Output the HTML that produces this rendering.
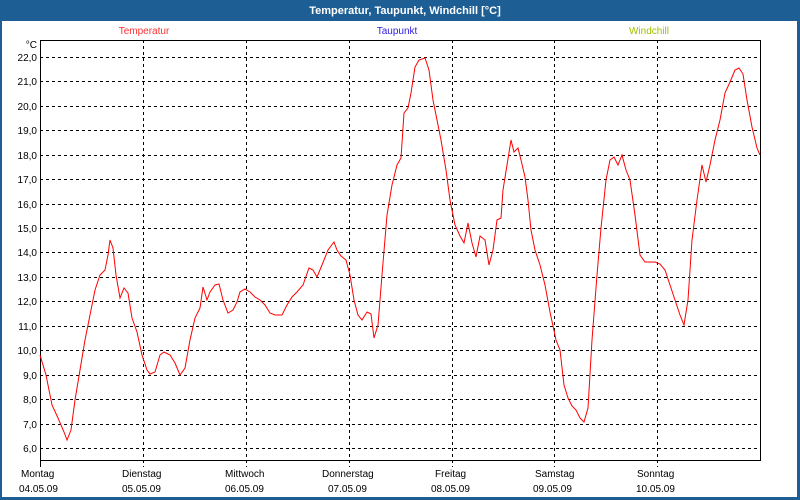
<!DOCTYPE html>
<html><head><meta charset="utf-8"><style>
html,body{margin:0;padding:0;width:800px;height:500px;overflow:hidden;background:#1d5e94;}
</style></head><body>
<svg width="800" height="500" xmlns="http://www.w3.org/2000/svg" font-family="'Liberation Sans', sans-serif">
<rect x="0" y="0" width="800" height="500" fill="#1d5e94"/>
<rect x="2" y="21" width="795" height="476" fill="#fff"/>
<text x="405" y="14" fill="#fff" font-size="11" font-weight="bold" text-anchor="middle">Temperatur, Taupunkt, Windchill [°C]</text>
<text x="144" y="34" fill="#ff3030" font-size="10" text-anchor="middle">Temperatur</text>
<text x="397" y="34" fill="#3020e0" font-size="10" text-anchor="middle">Taupunkt</text>
<text x="649" y="34" fill="#a0c000" font-size="10" text-anchor="middle">Windchill</text>
<g stroke="#000" stroke-width="1" stroke-dasharray="3,3" shape-rendering="crispEdges">
<line x1="40" x2="760" y1="57.5" y2="57.5"/><line x1="40" x2="760" y1="81.5" y2="81.5"/><line x1="40" x2="760" y1="106.5" y2="106.5"/><line x1="40" x2="760" y1="130.5" y2="130.5"/><line x1="40" x2="760" y1="155.5" y2="155.5"/><line x1="40" x2="760" y1="179.5" y2="179.5"/><line x1="40" x2="760" y1="204.5" y2="204.5"/><line x1="40" x2="760" y1="228.5" y2="228.5"/><line x1="40" x2="760" y1="252.5" y2="252.5"/><line x1="40" x2="760" y1="277.5" y2="277.5"/><line x1="40" x2="760" y1="301.5" y2="301.5"/><line x1="40" x2="760" y1="326.5" y2="326.5"/><line x1="40" x2="760" y1="350.5" y2="350.5"/><line x1="40" x2="760" y1="375.5" y2="375.5"/><line x1="40" x2="760" y1="399.5" y2="399.5"/><line x1="40" x2="760" y1="424.5" y2="424.5"/><line x1="40" x2="760" y1="448.5" y2="448.5"/>
<line x1="143.5" x2="143.5" y1="40" y2="467"/><line x1="246.5" x2="246.5" y1="40" y2="467"/><line x1="349.5" x2="349.5" y1="40" y2="467"/><line x1="452.5" x2="452.5" y1="40" y2="467"/><line x1="554.5" x2="554.5" y1="40" y2="467"/><line x1="657.5" x2="657.5" y1="40" y2="467"/>
</g>
<path d="M40.5 40.5V460.5H760.5V40.5Z" fill="none" stroke="#000" stroke-width="1" shape-rendering="crispEdges"/>
<line x1="40.5" x2="40.5" y1="460" y2="467" stroke="#000" shape-rendering="crispEdges"/>
<g font-size="10" fill="#000" text-anchor="end">
<text x="37" y="48">°C</text>
<text x="37" y="61">22,0</text><text x="37" y="85">21,0</text><text x="37" y="110">20,0</text><text x="37" y="134">19,0</text><text x="37" y="159">18,0</text><text x="37" y="183">17,0</text><text x="37" y="208">16,0</text><text x="37" y="232">15,0</text><text x="37" y="256">14,0</text><text x="37" y="281">13,0</text><text x="37" y="305">12,0</text><text x="37" y="330">11,0</text><text x="37" y="354">10,0</text><text x="37" y="379">9,0</text><text x="37" y="403">8,0</text><text x="37" y="428">7,0</text><text x="37" y="452">6,0</text>
</g>
<g font-size="10" fill="#000">
<text x="21" y="477">Montag</text><text x="19" y="492">04.05.09</text>
<text x="122" y="477">Dienstag</text><text x="122" y="492">05.05.09</text>
<text x="225" y="477">Mittwoch</text><text x="225" y="492">06.05.09</text>
<text x="322" y="477">Donnerstag</text><text x="328" y="492">07.05.09</text>
<text x="435" y="477">Freitag</text><text x="431" y="492">08.05.09</text>
<text x="535" y="477">Samstag</text><text x="533" y="492">09.05.09</text>
<text x="637" y="477">Sonntag</text><text x="636" y="492">10.05.09</text>
</g>
<polyline fill="none" stroke="#ff0000" stroke-width="1" points="40,355 46,375 52,405 58,418 64,432 67,440 71,430 75,400 80,370 85,340 90,315 95,290 100,275 105,270 108,255 110,240 113,248 116,275 120,298 124,288 128,293 132,318 137,332 142,355 147,370 150,374 155,372 160,355 164,352 170,355 175,363 180,375 185,368 190,340 195,318 200,308 203,287 207,300 210,292 215,285 219,284 223,300 228,313 233,310 237,302 240,292 245,289 250,292 255,297 260,300 265,305 270,313 275,315 282,315 287,305 292,297 297,292 303,285 309,268 313,270 317,277 322,265 328,250 334,242 337,250 341,256 346,260 350,275 354,300 358,315 362,320 367,312 371,314 374,338 378,325 382,275 387,215 392,185 397,165 401,158 404,113 408,108 411,93 415,67 419,60 425,58 429,70 433,100 437,120 441,140 446,170 450,200 455,225 460,236 464,243 468,223 472,243 476,257 480,236 485,240 489,265 493,250 497,220 501,218 503,190 507,165 511,140 514,152 518,148 521,160 525,177 528,200 531,230 535,250 540,265 545,285 550,312 556,340 560,350 564,385 568,398 572,406 576,410 580,418 584,422 588,408 592,340 597,275 601,228 606,180 610,160 614,157 618,165 622,155 626,170 630,180 635,215 640,255 645,262 650,262 655,262 660,264 665,270 670,285 675,300 680,315 684,325 688,300 692,240 697,200 702,165 706,182 710,165 715,140 720,120 725,93 730,82 735,70 739,68 743,74 747,100 752,127 757,148 760,155"/>
</svg>
</body></html>
